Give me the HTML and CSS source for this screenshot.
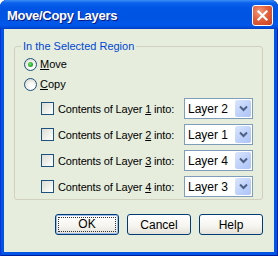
FILE: index.html
```html
<!DOCTYPE html>
<html lang="en">
<head>
    <meta charset="UTF-8">
    <title>Move/Copy Layers</title>
    <link rel="stylesheet" href="styles.css">
</head>
<body>

    <div class="window">
        <div class="titlebar">
            <span class="title">Move/Copy Layers</span>
            <span class="close">
                <svg width="13" height="13" viewBox="0 0 13 13">
                    <path d="M2.5 2.5 L10.5 10.5 M10.5 2.5 L2.5 10.5" stroke="#fff" stroke-width="2.2" stroke-linecap="square"/>
                </svg>
            </span>
        </div>

        <div class="client">
            <fieldset class="group">
                <legend>In the Selected Region</legend>

                <label class="radio-row">
                    <span class="radio checked"></span>
                    <span><u>M</u>ove</span>
                </label>
                <label class="radio-row">
                    <span class="radio"></span>
                    <span><u>C</u>opy</span>
                </label>

                <div class="layer-rows">
                    <div class="layer-row">
                        <label class="check-label"><span class="check"></span><span>Contents of Layer <u>1</u> into:</span></label>
                        <div class="combo"><span class="combo-text">Layer 2</span><span class="drop"><svg width="9" height="7" viewBox="0 0 9 7"><path d="M1 1.5 L4.5 5 L8 1.5" fill="none" stroke="#4D6185" stroke-width="2"/></svg></span></div>
                    </div>
                    <div class="layer-row">
                        <label class="check-label"><span class="check"></span><span>Contents of Layer <u>2</u> into:</span></label>
                        <div class="combo"><span class="combo-text">Layer 1</span><span class="drop"><svg width="9" height="7" viewBox="0 0 9 7"><path d="M1 1.5 L4.5 5 L8 1.5" fill="none" stroke="#4D6185" stroke-width="2"/></svg></span></div>
                    </div>
                    <div class="layer-row">
                        <label class="check-label"><span class="check"></span><span>Contents of Layer <u>3</u> into:</span></label>
                        <div class="combo"><span class="combo-text">Layer 4</span><span class="drop"><svg width="9" height="7" viewBox="0 0 9 7"><path d="M1 1.5 L4.5 5 L8 1.5" fill="none" stroke="#4D6185" stroke-width="2"/></svg></span></div>
                    </div>
                    <div class="layer-row">
                        <label class="check-label"><span class="check"></span><span>Contents of Layer <u>4</u> into:</span></label>
                        <div class="combo"><span class="combo-text">Layer 3</span><span class="drop"><svg width="9" height="7" viewBox="0 0 9 7"><path d="M1 1.5 L4.5 5 L8 1.5" fill="none" stroke="#4D6185" stroke-width="2"/></svg></span></div>
                    </div>
                </div>
            </fieldset>

            <div class="buttons">
                <button class="btn default"><span class="focus">OK</span></button>
                <button class="btn">Cancel</button>
                <button class="btn">Help</button>
            </div>
        </div>
    </div>

</body>
</html>
```

FILE: styles.css
```css
body {
    margin: 0;
    background-color: #ffffff;
    font-family: "Liberation Sans", Arial, sans-serif;
    font-size: 11px;
    color: #000;
}
.window {
    width: 278px;
    height: 256px;
    display: flex;
    flex-direction: column;
    background-color: #0055e5;
    border-radius: 7px 7px 0 0;
    box-shadow: inset 1px 0 0 #0831d9, inset -1px 0 0 #001ea0, inset 0 -1px 0 #001ea0;
    overflow: hidden;
}
.titlebar {
    height: 29px;
    flex-shrink: 0;
    display: flex;
    align-items: center;
    justify-content: space-between;
    padding: 0 5px 0 7px;
    background: linear-gradient(#3d8ef8 0px, #0a61eb 3px, #0055e5 8px, #0054e3 18px, #0158ea 25px, #0048d6 28px, #0036b8 29px);
}
.title {
    color: #fff;
    font-weight: bold;
    font-size: 13px;
    letter-spacing: -0.3px;
    text-shadow: 1px 1px 0 #0a1883;
    margin-top: 1px;
}
.close {
    width: 19px;
    height: 19px;
    border: 1px solid #fff;
    border-radius: 3px;
    background: radial-gradient(circle at 35% 30%, #f39a7d 0%, #e2613c 45%, #c8401e 100%);
    display: flex;
    align-items: center;
    justify-content: center;
    margin-top: 1px;
}
.client {
    flex: 1;
    margin: 0 4px 4px 4px;
    background-color: #e6eddd;
    padding: 11px 11px 0 10px;
}
.group {
    margin: 0;
    padding: 1px 9px 6px 9px;
    border: 1px solid #d0d0bf;
    border-radius: 3px;
    height: 151px;
}
.group legend {
    color: #0046d5;
    padding: 0 2px;
    margin-left: -3px;
    line-height: 13px;
}
.radio-row {
    height: 20px;
    display: flex;
    align-items: center;
    gap: 3px;
}
.radio {
    width: 11px;
    height: 11px;
    border: 1px solid #1c5180;
    border-radius: 50%;
    background: radial-gradient(circle at 60% 65%, #ffffff 20%, #e9e8e0 60%, #cfcec6 100%);
    display: flex;
    align-items: center;
    justify-content: center;
}
.radio.checked::before {
    content: "";
    width: 5px;
    height: 5px;
    border-radius: 50%;
    background: radial-gradient(circle at 40% 40%, #6fe06f 0%, #21a121 70%, #1a8a1a 100%);
}
.layer-rows {
    display: flex;
    flex-direction: column;
    gap: 5px;
    margin-top: 4px;
}
.layer-row {
    height: 21px;
    display: flex;
    align-items: center;
    justify-content: space-between;
    padding-left: 17px;
}
.check-label {
    display: flex;
    align-items: center;
    gap: 4px;
    white-space: nowrap;
    letter-spacing: -0.15px;
}
.check {
    width: 11px;
    height: 11px;
    border: 1px solid #1c5180;
    background: linear-gradient(135deg, #dcdcd7 0%, #eeeee9 50%, #ffffff 100%);
}
.combo {
    box-sizing: border-box;
    width: 69px;
    height: 21px;
    border: 1px solid #7f9db9;
    background-color: #fff;
    display: flex;
    align-items: center;
    justify-content: space-between;
    padding: 0 1px 0 3px;
}
.combo-text {
    font-size: 12px;
}
.drop {
    width: 16px;
    height: 17px;
    border-radius: 2px;
    background: linear-gradient(135deg, #dbe6fd 0%, #bccffa 60%, #aec4f7 100%);
    display: flex;
    align-items: center;
    justify-content: center;
}
.buttons {
    display: flex;
    justify-content: flex-end;
    gap: 8px;
    margin-top: 14px;
}
.btn {
    width: 64px;
    height: 21px;
    border: 1px solid #003c74;
    border-radius: 3px;
    background: linear-gradient(#ffffff 0%, #f5f4ef 60%, #e3e1d7 100%);
    font-family: "Liberation Sans", Arial, sans-serif;
    font-size: 12px;
    color: #000;
    padding: 0;
    display: flex;
    align-items: center;
    justify-content: center;
}
.btn.default {
    box-shadow: inset 0 0 0 1px #9ebcec;
}
.focus {
    width: 56px;
    height: 13px;
    border: 1px dotted #333;
    line-height: 13px;
    text-align: center;
}
```
